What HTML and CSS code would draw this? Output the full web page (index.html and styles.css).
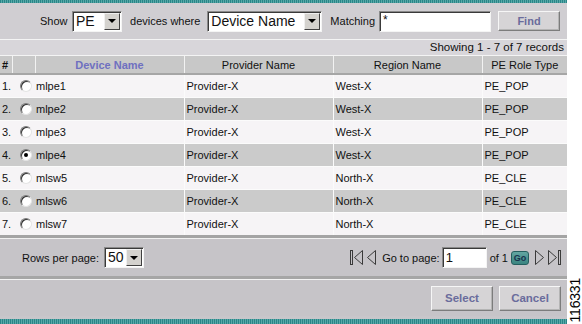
FILE: index.html
```html
<!DOCTYPE html>
<html lang="en">
<head>
    <meta charset="UTF-8">
    <title>Select Device</title>
    <link rel="stylesheet" href="styles.css">
</head>
<body>
    <div class="page">
        <div class="panel">
            <div class="teal top"></div>

            <div class="filter-bar">
                <span class="label show">Show</span>
                <div class="select sel-type"><span class="value">PE</span><span class="drop"><i></i></span></div>
                <span class="label where">devices where</span>
                <div class="select sel-field"><span class="value">Device Name</span><span class="drop"><i></i></span></div>
                <span class="label">Matching</span>
                <div class="text-input match">*</div>
                <button class="btn find">Find</button>
            </div>

            <div class="showing">Showing 1 - 7 of 7 records</div>

            <table class="grid">
                <colgroup>
                    <col class="c-num"><col class="c-radio"><col class="c-name"><col class="c-prov"><col class="c-region"><col class="c-role">
                </colgroup>
                <thead>
                    <tr>
                        <th class="hash">#</th>
                        <th></th>
                        <th class="sorted">Device Name</th>
                        <th>Provider Name</th>
                        <th>Region Name</th>
                        <th>PE Role Type</th>
                    </tr>
                </thead>
                <tbody>
                    <tr><td>1.</td><td class="rad"><span class="radio"></span></td><td class="name">mlpe1</td><td>Provider-X</td><td>West-X</td><td>PE_POP</td></tr>
                    <tr class="alt"><td>2.</td><td class="rad"><span class="radio"></span></td><td class="name">mlpe2</td><td>Provider-X</td><td>West-X</td><td>PE_POP</td></tr>
                    <tr><td>3.</td><td class="rad"><span class="radio"></span></td><td class="name">mlpe3</td><td>Provider-X</td><td>West-X</td><td>PE_POP</td></tr>
                    <tr class="alt"><td>4.</td><td class="rad"><span class="radio checked"></span></td><td class="name">mlpe4</td><td>Provider-X</td><td>West-X</td><td>PE_POP</td></tr>
                    <tr><td>5.</td><td class="rad"><span class="radio"></span></td><td class="name">mlsw5</td><td>Provider-X</td><td>North-X</td><td>PE_CLE</td></tr>
                    <tr class="alt"><td>6.</td><td class="rad"><span class="radio"></span></td><td class="name">mlsw6</td><td>Provider-X</td><td>North-X</td><td>PE_CLE</td></tr>
                    <tr><td>7.</td><td class="rad"><span class="radio"></span></td><td class="name">mlsw7</td><td>Provider-X</td><td>North-X</td><td>PE_CLE</td></tr>
                </tbody>
            </table>

            <div class="pager-bar">
                <div class="rows-per-page">
                    <span class="label">Rows per page:</span>
                    <div class="select sel-rows"><span class="value">50</span><span class="drop"><i></i></span></div>
                </div>
                <div class="pager">
                    <svg class="nav first" width="14" height="17" viewBox="0 0 14 17"><rect x="0.5" y="1.5" width="2" height="14" fill="none" stroke="#3a3a3a"/><path d="M12.5 1.5 L4.5 8.5 L12.5 15.5 Z" fill="none" stroke="#3a3a3a"/></svg>
                    <svg class="nav prev" width="10" height="17" viewBox="0 0 10 17"><path d="M8.5 1.5 L0.5 8.5 L8.5 15.5 Z" fill="none" stroke="#3a3a3a"/></svg>
                    <span class="label goto">Go to page:</span>
                    <div class="text-input page-no">1</div>
                    <span class="label">of 1</span>
                    <span class="go">Go</span>
                    <svg class="nav next" width="10" height="17" viewBox="0 0 10 17"><path d="M1.5 1.5 L9.5 8.5 L1.5 15.5 Z" fill="none" stroke="#3a3a3a"/></svg>
                    <svg class="nav last" width="15" height="17" viewBox="0 0 15 17"><path d="M1.5 1.5 L9.5 8.5 L1.5 15.5 Z" fill="none" stroke="#3a3a3a"/><rect x="11.5" y="1.5" width="2" height="14" fill="none" stroke="#3a3a3a"/></svg>
                </div>
            </div>

            <div class="action-bar">
                <button class="btn">Select</button>
                <button class="btn">Cancel</button>
            </div>

            <div class="teal bottom"></div>
        </div>
        <div class="side">
            <span class="fig-no">116331</span>
        </div>
    </div>
</body>
</html>
```

FILE: styles.css
```css
body {
    margin: 0;
    background: #ffffff;
    font-family: "Liberation Sans", Arial, sans-serif;
    font-size: 11px;
    color: #111111;
}
.page {
    display: flex;
    width: 582px;
    height: 324px;
}
.panel {
    width: 567px;
    display: flex;
    flex-direction: column;
    background: #c8c6ca;
}
.side {
    flex: 1;
    display: flex;
    flex-direction: column;
    justify-content: flex-end;
    align-items: center;
    padding-bottom: 2px;
}
.fig-no {
    writing-mode: vertical-rl;
    transform: rotate(180deg);
    font-size: 14px;
    color: #000000;
    letter-spacing: -0.2px;
}

.teal {
    background: repeating-linear-gradient(90deg, #2a8587 0 1px, #58a9a9 1px 2px);
}
.teal.top {
    height: 3px;
}
.teal.bottom {
    height: 5px;
    margin-top: auto;
}

.label {
    white-space: nowrap;
}

/* filter row */
.filter-bar {
    height: 36px;
    display: flex;
    align-items: center;
    padding-left: 40px;
    background: #d0ced2;
    border-bottom: 1px solid #f4f4f4;
}
.filter-bar .label {
    margin-right: 4px;
}
.filter-bar .label.show {
    margin-right: 4.5px;
}
.filter-bar .label.where {
    margin-right: 7px;
}
.filter-bar .select,
.filter-bar .text-input {
    margin-right: 8px;
}
.filter-bar .sel-type {
    width: 50px;
}
.filter-bar .sel-field {
    width: 115px;
}

.select {
    height: 21px;
    box-sizing: border-box;
    display: flex;
    background: #ffffff;
    border: 1px solid;
    border-color: #8a8a8a #f4f4f4 #f4f4f4 #8a8a8a;
    box-shadow: inset 1px 1px 0 #3a3a3a;
}
.select .value {
    flex: 1;
    font-size: 14px;
    line-height: 19px;
    padding-left: 3px;
    overflow: hidden;
    white-space: nowrap;
}
.select .drop {
    width: 16px;
    margin: 1px 1px 1px 0;
    box-sizing: border-box;
    background: #d4d2ce;
    border: 1px solid;
    border-color: #f0f0f0 #404040 #404040 #f0f0f0;
    display: flex;
    align-items: center;
    justify-content: center;
}
.select .drop i {
    width: 0;
    height: 0;
    border-left: 4px solid transparent;
    border-right: 4px solid transparent;
    border-top: 4px solid #000000;
}

.text-input {
    height: 21px;
    box-sizing: border-box;
    background: #ffffff;
    border: 1px solid;
    border-color: #8a8a8a #f4f4f4 #f4f4f4 #8a8a8a;
    box-shadow: inset 1px 1px 0 #3a3a3a;
    font-size: 13px;
    line-height: 19px;
    padding-left: 3px;
}
.text-input.match {
    width: 112px;
    margin-left: 0;
    margin-right: 7px;
    font-size: 12px;
    line-height: 16px;
}

.btn {
    height: 25px;
    width: 62px;
    font-family: "Liberation Sans", Arial, sans-serif;
    font-size: 11.5px;
    font-weight: bold;
    color: #6a6c9c;
    background: #d6d4d6;
    border: 1px solid;
    border-color: #f6f6f6 #7c7c7c #7c7c7c #f6f6f6;
    box-shadow: inset -1px -1px 0 #b4b4b4;
    padding: 0;
}
.btn.find {
    height: 20px;
    font-size: 11px;
}

.showing {
    height: 15px;
    line-height: 15px;
    text-align: right;
    padding-right: 3px;
    font-size: 11.5px;
    background: #d8d6da;
    border-bottom: 1px solid #f4f4f4;
}

/* data grid */
.grid {
    border-collapse: collapse;
    table-layout: fixed;
    width: 567px;
}
.c-num { width: 12px; }
.c-radio { width: 23px; }
.c-name { width: 149px; }
.c-prov { width: 149px; }
.c-region { width: 149px; }
.c-role { width: 85px; }

.grid th {
    height: 17px;
    padding: 0;
    font-weight: normal;
    font-size: 11px;
    text-align: center;
    background: #c8c8c8;
    border-left: 1px solid #f2f2f2;
    border-bottom: 2px solid #a6a6a6;
}
.grid th:first-child {
    border-left: none;
    text-align: left;
    padding-left: 2px;
}
.grid th.hash {
    font-weight: bold;
}
.grid th.sorted {
    font-weight: bold;
    color: #6f70c0;
}

.grid td {
    height: 22px;
    padding: 0 0 0 2px;
    font-size: 11px;
    white-space: nowrap;
    background: #f6f4f6;
    border-left: 1px solid #fbfbfb;
    border-bottom: 1px solid #fbfbfb;
}
.grid td:first-child {
    border-left: none;
}
.grid td.rad,
.grid td.name {
    border-left: none;
}
.grid td.name {
    padding-left: 1px;
}
.grid td.rad {
    padding-left: 8px;
}
.grid tr.alt td {
    background: #cbcbcb;
}
.grid tbody tr:last-child td {
    border-bottom: 3px solid #a4a4a4;
}

.radio {
    display: block;
    width: 12px;
    height: 12px;
    box-sizing: border-box;
    border-radius: 50%;
    background: #ffffff;
    border: 1px solid;
    border-color: #7a7a7a #e4e4e4 #e4e4e4 #7a7a7a;
    box-shadow: inset 1px 1px 0 #333333;
    position: relative;
}
.radio.checked::after {
    content: "";
    position: absolute;
    left: 3px;
    top: 3px;
    width: 4px;
    height: 4px;
    border-radius: 50%;
    background: #000000;
}

/* pager */
.pager-bar {
    height: 37px;
    display: flex;
    align-items: center;
    justify-content: space-between;
    padding: 0 5px 0 22px;
    border-top: 1px solid #f0f0f0;
    border-bottom: 3px solid #a6a6a6;
    background: #c6c4c8;
}
.rows-per-page {
    display: flex;
    align-items: center;
    gap: 5px;
}
.sel-rows {
    width: 40px;
}
.pager {
    display: flex;
    align-items: center;
}
.nav {
    display: block;
}
.nav.first {
    margin-right: 3px;
}
.nav.prev {
    margin-right: 5px;
}
.goto {
    margin-right: 2px;
}
.text-input.page-no {
    width: 45px;
    margin-right: 3px;
    font-size: 13px;
}
.go {
    width: 18px;
    height: 14px;
    box-sizing: border-box;
    margin: 0 5px 0 3px;
    border-radius: 3px;
    background: linear-gradient(#63a6a2, #3a8480);
    border: 1px solid #255f5f;
    color: #17324d;
    font-size: 9px;
    font-weight: bold;
    line-height: 12px;
    text-align: center;
}
.nav.next {
    margin-right: 3px;
}

.action-bar {
    height: 36px;
    display: flex;
    align-items: center;
    justify-content: flex-end;
    gap: 6px;
    padding-right: 6px;
    border-top: 1px solid #f2f2f2;
    background: #c6c4c8;
}
```
